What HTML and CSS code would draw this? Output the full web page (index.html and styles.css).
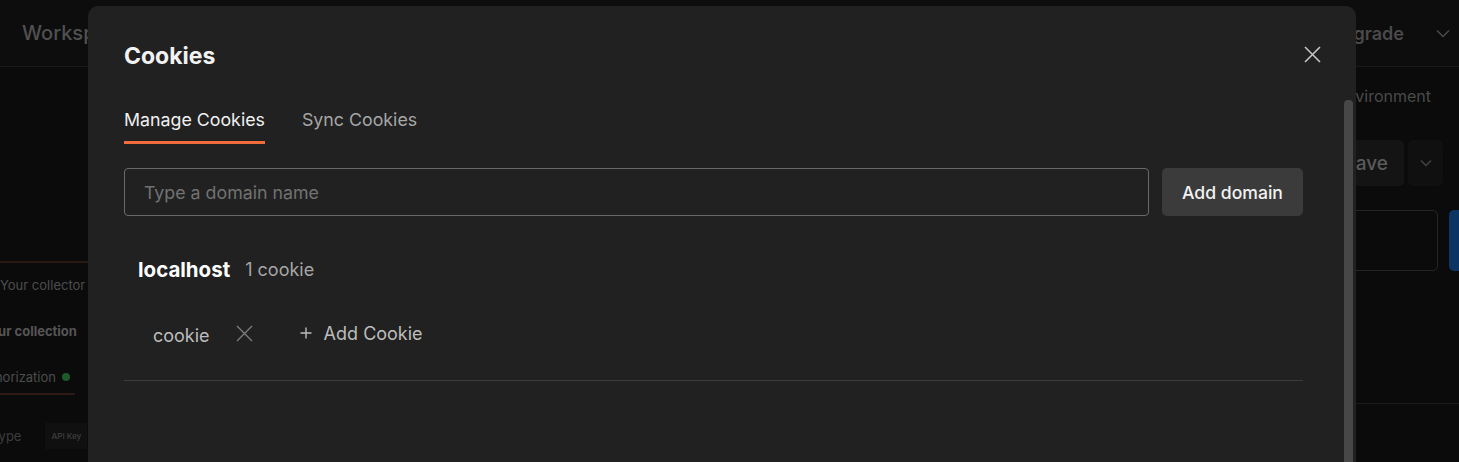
FILE: index.html
```html
<!DOCTYPE html>
<html>
<head>
<meta charset="utf-8">
<link rel="stylesheet" href="styles.css">
</head>
<body>
<div class="app">
  <header class="topbar">
    <span class="ws-title">Workspaces</span>
    <div class="top-right">
      <span class="upgrade">Upgrade</span>
      <svg class="chev" width="14" height="9" viewBox="0 0 14 9"><path d="M1 1.5 L7 7.5 L13 1.5" fill="none" stroke="#4a4a4a" stroke-width="1.5"/></svg>
    </div>
  </header>
  <div class="workspace">
    <aside class="left">
      <div class="left-inner">
        <div class="l-tabline"></div>
        <div class="l-row l-desc">Your collector</div>
        <div class="l-row l-bold">Your collection</div>
        <div class="l-row l-auth"><span>Authorization</span><span class="dot"></span></div>
        <div class="l-underline"></div>
        <div class="l-row l-type"><span class="l-typetxt">Type</span><span class="apikey">API Key</span></div>
      </div>
    </aside>
    <div class="spacer"></div>
    <section class="right">
      <div class="env">No Environment</div>
      <div class="save-row">
        <div class="save-btn">Save</div>
        <div class="save-chev"><svg width="12" height="8" viewBox="0 0 12 8"><path d="M1 1.5 L6 6.5 L11 1.5" fill="none" stroke="#444" stroke-width="1.4"/></svg></div>
      </div>
      <div class="url-row">
        <div class="url-box"></div>
        <div class="send-btn"></div>
      </div>
      <div class="r-line"></div>
    </section>
  </div>
</div>

<div class="modal">
  <div class="modal-head">
    <h1 class="modal-title">Cookies</h1>
    <button class="close-btn" aria-label="Close">
      <svg width="17" height="17" viewBox="0 0 17 17"><path d="M1 1 L16 16 M16 1 L1 16" fill="none" stroke="#c4c4c4" stroke-width="1.6"/></svg>
    </button>
  </div>
  <nav class="tabs">
    <span class="tab active">Manage Cookies</span>
    <span class="tab">Sync Cookies</span>
  </nav>
  <div class="domain-row">
    <div class="domain-input">Type a domain name</div>
    <button class="add-domain">Add domain</button>
  </div>
  <div class="domain-head">
    <span class="domain-name">localhost</span>
    <span class="domain-count">1 cookie</span>
  </div>
  <div class="cookie-row">
    <span class="cookie-chip">cookie</span>
    <svg class="cookie-x" width="17" height="17" viewBox="0 0 17 17"><path d="M1 1 L16 16 M16 1 L1 16" fill="none" stroke="#7e7e7e" stroke-width="1.3"/></svg>
    <span class="add-cookie">
      <svg width="12" height="12" viewBox="0 0 12 12"><path d="M6 0.5 V11.5 M0.5 6 H11.5" fill="none" stroke="#bdbdbd" stroke-width="1.4"/></svg>
      <span>Add Cookie</span>
    </span>
  </div>
  <div class="divider"></div>
  <div class="scrollbar"></div>
</div>
</body>
</html>
```

FILE: styles.css
```css
* { box-sizing: border-box; }
html, body {
  margin: 0;
  padding: 0;
  height: 100%;
  overflow: hidden;
}
body {
  background: #0b0b0b;
  font-family: Inter, "Noto Sans", "Liberation Sans", sans-serif;
  color: #e6e6e6;
}

/* ---------- dimmed background app ---------- */
.app {
  height: 100%;
  display: flex;
  flex-direction: column;
}
.topbar {
  height: 67px;
  flex: none;
  display: flex;
  align-items: center;
  justify-content: space-between;
  padding: 0 9px 0 22px;
  border-bottom: 1px solid #1a1a1a;
  background: #0d0d0d;
}
.ws-title {
  font-size: 20px;
  color: #505050;
  font-weight: 500;
}
.top-right {
  display: flex;
  align-items: center;
  gap: 32px;
}
.upgrade {
  font-size: 18px;
  font-weight: 600;
  color: #4a4a4a;
}
.workspace {
  flex: 1;
  display: flex;
}
.left {
  width: 120px;
  overflow: hidden;
  flex: none;
}
.left-inner {
  margin-left: -30px;
  padding-top: 194px;
  font-size: 13px;
  color: #4d4d4d;
}
.l-tabline {
  height: 2px;
  background: #2c1a12;
}
.l-row {
  display: flex;
  align-items: center;
  white-space: nowrap;
}
.l-desc {
  height: 44px;
  padding-left: 30px;
}
.l-bold {
  height: 48px;
  padding-left: 12px;
  font-weight: 700;
  color: #555;
}
.l-auth {
  height: 32px;
  margin-top: 6px;
  padding-left: 4px;
  gap: 6px;
}
.dot {
  width: 8px;
  height: 8px;
  border-radius: 50%;
  background: #1d5a2a;
}
.l-underline {
  height: 2px;
  width: 105px;
  background: #2e1a13;
}
.l-type {
  height: 82px;
  padding-left: 21px;
  gap: 24px;
}
.l-typetxt { color: #3d3d3d; }
.apikey {
  font-size: 8px;
  color: #3a3a3a;
  background: #101010;
  padding: 8px 6px;
  font-weight: 600;
}
.spacer { flex: 1; }
.right {
  width: 260px;
  flex: none;
  display: flex;
  flex-direction: column;
  align-items: flex-end;
}
.env {
  height: 58px;
  display: flex;
  align-items: center;
  padding-right: 28px;
  font-size: 16px;
  color: #4a4a4a;
}
.save-row {
  margin-top: 15px;
  display: flex;
  gap: 4px;
  padding-right: 16px;
}
.save-btn {
  width: 110px;
  height: 46px;
  background: #141414;
  border-radius: 5px;
  color: #5a5a5a;
  font-size: 19px;
  font-weight: 500;
  display: flex;
  align-items: center;
  justify-content: flex-end;
  padding-right: 16px;
}
.save-chev {
  width: 35px;
  height: 46px;
  background: #101010;
  border-radius: 5px;
  display: flex;
  align-items: center;
  justify-content: center;
}
.url-row {
  margin-top: 24px;
  display: flex;
  gap: 11px;
  align-self: stretch;
  justify-content: flex-end;
  margin-right: -20px;
}
.url-box {
  width: 180px;
  height: 61px;
  border: 1px solid #262626;
  border-radius: 5px;
}
.send-btn {
  width: 30px;
  height: 61px;
  background: #0c3564;
  border-radius: 5px;
}
.r-line {
  margin-top: 132px;
  height: 1px;
  align-self: stretch;
  background: #1c1c1c;
}

/* ---------- modal ---------- */
.modal {
  position: absolute;
  left: 88px;
  top: 6px;
  width: 1268px;
  height: 480px;
  background: #212121;
  border-radius: 10px;
  padding: 35px 53px 0 36px;
}
.modal-head {
  display: flex;
  align-items: center;
  justify-content: space-between;
  height: 30px;
  margin-right: -18px;
}
.modal-title {
  margin: 0;
  font-size: 23px;
  font-weight: 700;
  color: #f2f2f2;
  line-height: 30px;
}
.close-btn {
  background: none;
  border: 0;
  padding: 0;
  width: 17px;
  height: 17px;
  display: flex;
  margin-top: -4px;
}
.tabs {
  margin-top: 37px;
  display: flex;
  gap: 37px;
}
.tab {
  font-size: 17.8px;
  line-height: 24px;
  padding-bottom: 9px;
  border-bottom: 3px solid transparent;
  color: #a6a6a6;
}
.tab.active {
  color: #f0f0f0;
  border-bottom-color: #f26b3a;
}
.domain-row {
  margin-top: 24px;
  display: flex;
  gap: 13px;
}
.domain-input {
  flex: 1;
  height: 48px;
  border: 1px solid #6a6a6a;
  border-radius: 4px;
  display: flex;
  align-items: center;
  padding-left: 19px;
  font-size: 17.8px;
  color: #727272;
}
.add-domain {
  width: 141px;
  height: 48px;
  border: 0;
  border-radius: 5px;
  background: #3b3b3b;
  color: #f2f2f2;
  font-family: inherit;
  font-size: 17.6px;
  font-weight: 500;
}
.domain-head {
  margin-top: 41px;
  height: 24px;
  display: flex;
  align-items: center;
  gap: 15px;
  padding-left: 14px;
}
.domain-name {
  font-size: 20.5px;
  font-weight: 700;
  color: #ffffff;
}
.domain-count {
  font-size: 18px;
  color: #a6a6a6;
}
.cookie-row {
  margin-top: 36px;
  height: 32px;
  display: flex;
  align-items: center;
  padding-left: 29px;
}
.cookie-chip {
  font-size: 18px;
  color: #bcbcbc;
  margin-top: 4px;
}
.cookie-x {
  margin-left: 26px;
}
.add-cookie {
  margin-left: 47px;
  display: flex;
  align-items: center;
  gap: 12px;
  font-size: 18px;
  color: #bcbcbc;
}
.divider {
  margin-top: 31px;
  height: 1px;
  background: #3c3c3c;
}
.scrollbar {
  position: absolute;
  right: 3px;
  top: 94px;
  width: 9px;
  bottom: 0;
  background: #474747;
  border-radius: 4px 4px 0 0;
}
```
